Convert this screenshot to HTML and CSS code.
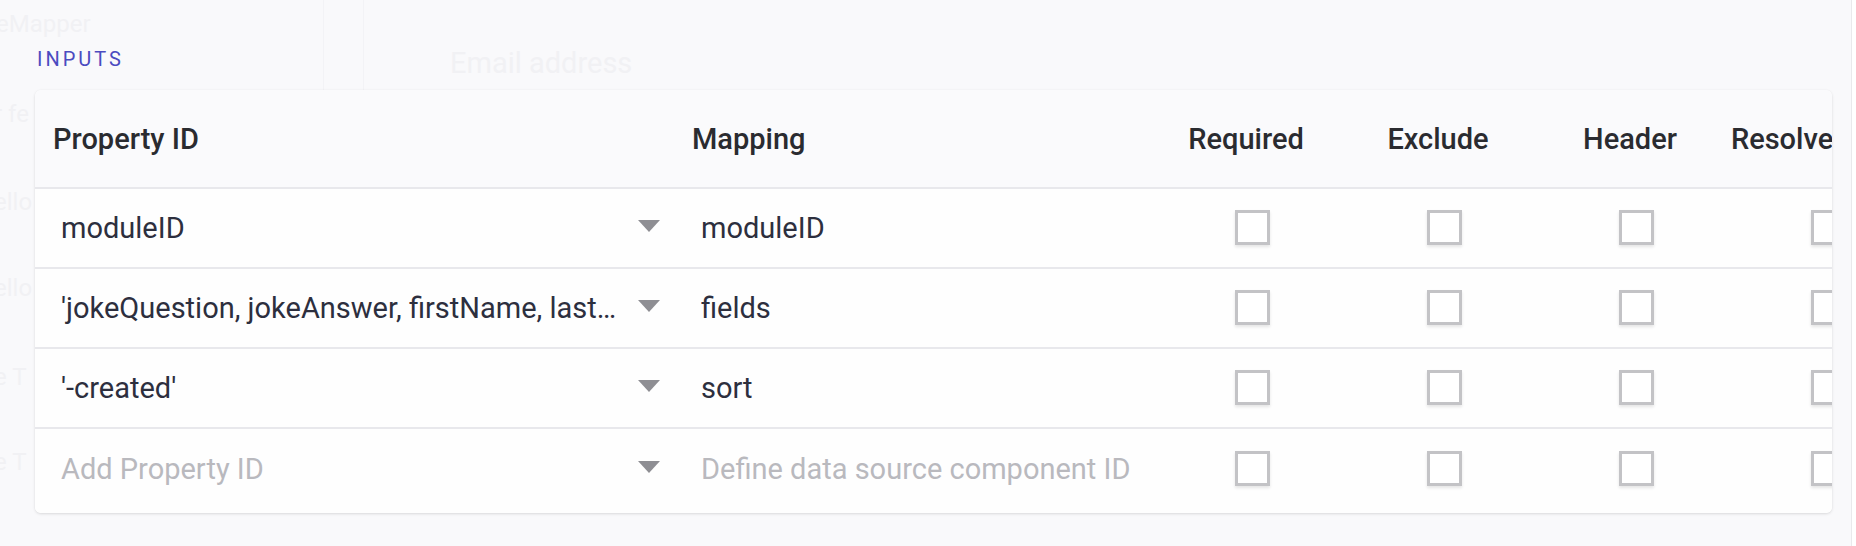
FILE: index.html
```html
<!DOCTYPE html>
<html lang="en">
<head>
<meta charset="utf-8">
<title>Inputs</title>
<link rel="stylesheet" href="styles.css">
</head>
<body>
<div class="page">
  <div class="ghost" aria-hidden="true">
    <span class="g g-mapper">eMapper</span>
    <span class="g g-email">Email address</span>
    <span class="g-line g-line1"></span>
    <span class="g-line g-line2"></span>
    <span class="g g-side g-s1">r fe</span>
    <span class="g g-side g-s2">ello</span>
    <span class="g g-side g-s3">ello</span>
    <span class="g g-side g-s4">e T</span>
    <span class="g g-side g-s5">e T</span>
  </div>

  <div class="section-label">INPUTS</div>

  <div class="card">
    <div class="row head">
      <div class="cell c-prop">Property ID</div>
      <div class="cell c-map">Mapping</div>
      <div class="cell c-chk">Required</div>
      <div class="cell c-chk">Exclude</div>
      <div class="cell c-chk">Header</div>
      <div class="cell c-chk">Resolve Value</div>
    </div>

    <div class="row">
      <div class="cell c-prop"><span class="val">moduleID</span><svg class="arrow" viewBox="0 0 22 12"><polygon points="0,0 22,0 11,12"/></svg></div>
      <div class="cell c-map"><span class="val">moduleID</span></div>
      <div class="cell c-chk"><span class="box"></span></div>
      <div class="cell c-chk"><span class="box"></span></div>
      <div class="cell c-chk"><span class="box"></span></div>
      <div class="cell c-chk"><span class="box"></span></div>
    </div>

    <div class="row">
      <div class="cell c-prop"><span class="val">'jokeQuestion, jokeAnswer, firstName, lastName, email'</span><svg class="arrow" viewBox="0 0 22 12"><polygon points="0,0 22,0 11,12"/></svg></div>
      <div class="cell c-map"><span class="val">fields</span></div>
      <div class="cell c-chk"><span class="box"></span></div>
      <div class="cell c-chk"><span class="box"></span></div>
      <div class="cell c-chk"><span class="box"></span></div>
      <div class="cell c-chk"><span class="box"></span></div>
    </div>

    <div class="row">
      <div class="cell c-prop"><span class="val">'-created'</span><svg class="arrow" viewBox="0 0 22 12"><polygon points="0,0 22,0 11,12"/></svg></div>
      <div class="cell c-map"><span class="val">sort</span></div>
      <div class="cell c-chk"><span class="box"></span></div>
      <div class="cell c-chk"><span class="box"></span></div>
      <div class="cell c-chk"><span class="box"></span></div>
      <div class="cell c-chk"><span class="box"></span></div>
    </div>

    <div class="row last">
      <div class="cell c-prop"><span class="val ph">Add Property ID</span><svg class="arrow" viewBox="0 0 22 12"><polygon points="0,0 22,0 11,12"/></svg></div>
      <div class="cell c-map"><span class="val ph">Define data source component ID</span></div>
      <div class="cell c-chk"><span class="box"></span></div>
      <div class="cell c-chk"><span class="box"></span></div>
      <div class="cell c-chk"><span class="box"></span></div>
      <div class="cell c-chk"><span class="box"></span></div>
    </div>
  </div>
</div>
</body>
</html>
```

FILE: styles.css
```css
html, body {
  margin: 0;
  padding: 0;
  background: #ffffff;
}

body {
  font-family: Roboto, "Liberation Sans", Arial, sans-serif;
  color: #2d2f3e;
}

.page {
  position: relative;
  box-sizing: border-box;
  width: 1852px;
  height: 546px;
  padding: 47px 0 0 35px;
  background: #f9f9fb;
  border-right: 1px solid #e9e9ec;
  overflow: hidden;
}

/* faint underlying page seen through the overlay */
.ghost {
  position: absolute;
  inset: 0;
  z-index: 0;
  pointer-events: none;
}
.g {
  position: absolute;
  color: #f1f1f4;
  font-size: 26px;
  white-space: nowrap;
}
.g-mapper { left: -4px; top: 10px; font-size: 24px; }
.g-email { left: 450px; top: 46px; font-size: 29px; }
.g-side { left: -6px; font-size: 24px; }
.g-s1 { top: 100px; }
.g-s2 { top: 188px; }
.g-s3 { top: 274px; }
.g-s4 { top: 363px; }
.g-s5 { top: 448px; }
.g-line {
  position: absolute;
  top: 0;
  width: 1px;
  height: 90px;
  background: #f3f3f6;
}
.g-line1 { left: 323px; }
.g-line2 { left: 363px; }

.section-label {
  position: relative;
  z-index: 1;
  height: 24px;
  line-height: 24px;
  margin: 0 0 19px 2px;
  font-size: 20px;
  letter-spacing: 3px;
  color: #4b4bc0;
}

.card {
  position: relative;
  z-index: 1;
  width: 1797px;
  overflow: hidden;
  background: #ffffff;
  border-radius: 6px;
  box-shadow: 0 1px 3px rgba(0, 0, 0, 0.13), 0 0 1px rgba(0, 0, 0, 0.06);
}

.row {
  display: grid;
  grid-template-columns: 641px 480px 192px 192px 192px 192px;
  height: 78px;
  border-bottom: 2px solid #e8e8ec;
  background: #fefefe;
  font-size: 29px;
}
.row.head {
  height: 97px;
  background: #fafafc;
  font-weight: 500;
  color: #2a2b30;
}
.row.last {
  height: 80px;
  padding-bottom: 4px;
  border-bottom: none;
}

.cell {
  display: flex;
  align-items: center;
  min-width: 0;
  white-space: nowrap;
}

.c-prop {
  padding: 0 16px 0 26px;
}
.head .c-prop {
  padding-left: 18px;
}
.c-map {
  padding-left: 25px;
}
.head .c-map {
  padding-left: 16px;
}
.c-chk {
  justify-content: center;
}
.head .c-chk {
  padding-right: 12px;
}

.val {
  flex: 1;
  min-width: 0;
  overflow: hidden;
  text-overflow: ellipsis;
}
.c-prop .val {
  margin-right: 18px;
}
.val.ph {
  color: #b9b9be;
}

.arrow {
  flex: none;
  width: 22px;
  height: 12px;
  margin-top: -4px;
  fill: #8e8e93;
}

.box {
  box-sizing: border-box;
  width: 35px;
  height: 35px;
  border: 3px solid #c3c3c6;
  background: #ffffff;
  box-shadow: 0 2px 3px rgba(0, 0, 0, 0.1);
  margin-top: -2px;
}
```
